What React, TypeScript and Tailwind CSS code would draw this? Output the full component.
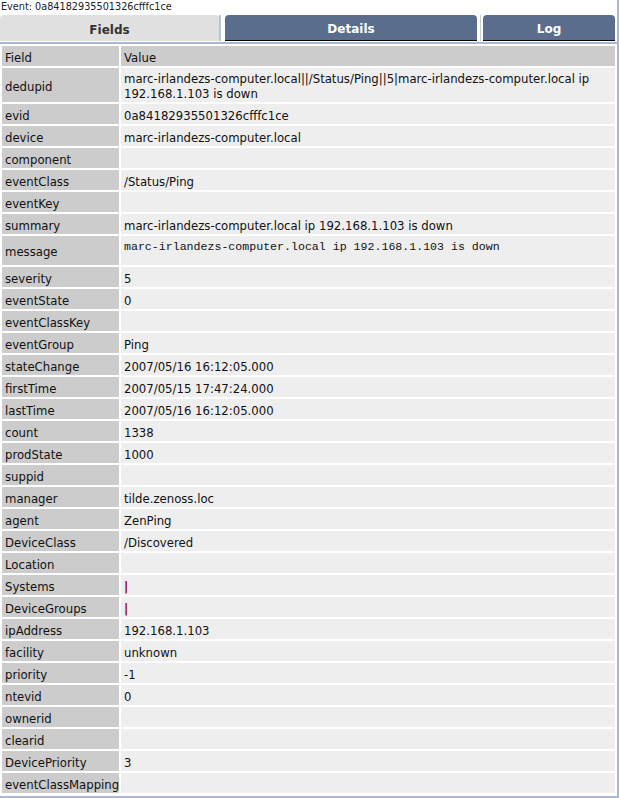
const rows: { field: string; value?: string; tall?: boolean; mono?: boolean; link?: boolean }[] = [
  {
    field: "dedupid",
    value:
      "marc-irlandezs-computer.local||/Status/Ping||5|marc-irlandezs-computer.local ip 192.168.1.103 is down",
    tall: true,
  },
  { field: "evid", value: "0a84182935501326cfffc1ce" },
  { field: "device", value: "marc-irlandezs-computer.local" },
  { field: "component" },
  { field: "eventClass", value: "/Status/Ping" },
  { field: "eventKey" },
  { field: "summary", value: "marc-irlandezs-computer.local ip 192.168.1.103 is down" },
  {
    field: "message",
    value: "marc-irlandezs-computer.local ip 192.168.1.103 is down",
    mono: true,
  },
  { field: "severity", value: "5" },
  { field: "eventState", value: "0" },
  { field: "eventClassKey" },
  { field: "eventGroup", value: "Ping" },
  { field: "stateChange", value: "2007/05/16 16:12:05.000" },
  { field: "firstTime", value: "2007/05/15 17:47:24.000" },
  { field: "lastTime", value: "2007/05/16 16:12:05.000" },
  { field: "count", value: "1338" },
  { field: "prodState", value: "1000" },
  { field: "suppid" },
  { field: "manager", value: "tilde.zenoss.loc" },
  { field: "agent", value: "ZenPing" },
  { field: "DeviceClass", value: "/Discovered" },
  { field: "Location" },
  { field: "Systems", value: "|", link: true },
  { field: "DeviceGroups", value: "|", link: true },
  { field: "ipAddress", value: "192.168.1.103" },
  { field: "facility", value: "unknown" },
  { field: "priority", value: "-1" },
  { field: "ntevid", value: "0" },
  { field: "ownerid" },
  { field: "clearid" },
  { field: "DevicePriority", value: "3" },
  { field: "eventClassMapping" },
];

function Tab({ label, active }: { label: string; active?: boolean }) {
  return active ? (
    <div className="w-[219px] h-[26px] pt-[3px] bg-[#e0e0e0] rounded-tl-[4px] rounded-tr-[3px] flex items-center justify-center text-[12px] font-bold text-[#333]">
      {label}
    </div>
  ) : (
    <div className="h-[26px] flex flex-col">
      <div className="h-[25px] pt-[3px] bg-[#5a6d8d] rounded-tl-[4px] rounded-tr-[4px] flex items-center justify-center text-[12px] font-bold text-white">
        {label}
      </div>
      <div className="h-[1px] bg-black" />
    </div>
  );
}

export default function App() {
  return (
    <div className="w-[619px] h-[798px] bg-white border-r-2 border-b-2 border-[#aab7d0] font-['DejaVu_Sans',sans-serif] text-[#111] overflow-hidden">
      <div className="h-[15px] pl-[1px] pt-[1px] text-[9.7px] leading-[12px] text-[#222]">
        Event: 0a84182935501326cfffc1ce
      </div>
      <div className="flex h-[26px]">
        <Tab label="Fields" active />
        <div className="w-[2px] h-[26px] bg-[#b9c3d6]" />
        <div className="w-[4px]" />
        <div className="w-[252px]">
          <Tab label="Details" />
        </div>
        <div className="w-[3px]" />
        <div className="w-[1px] h-[26px] bg-[#c5cddd]" />
        <div className="w-[2px]" />
        <div className="w-[132px]">
          <Tab label="Log" />
        </div>
      </div>
      <div className="h-[1px]" />
      <div className="h-[2px] bg-[#aab7d0]" />
      <div className="grid grid-cols-[117px_1fr] gap-[2px] p-[2px] text-[11.7px] leading-[15px]">
        <div className="bg-[#cccccc] h-[20px] px-[3px] pt-[5px] flex items-center">Field</div>
        <div className="bg-[#cccccc] h-[20px] px-[3px] pt-[5px] flex items-center">Value</div>
        {rows.map((r) => (
          <div key={r.field} className="contents">
            <div
              className={`bg-[#cccccc] px-[3px] flex items-center whitespace-nowrap ${
                r.tall ? "h-[34px] pt-[4px]" : r.mono ? "h-[29px] pt-[4px]" : "h-[20px] pt-[5px]"
              }`}
            >
              {r.field}
            </div>
            <div
              className={`bg-[#eeeeee] px-[3px] flex ${
                r.tall
                  ? "h-[34px] pt-[4px] items-center"
                  : r.mono
                    ? "h-[29px] items-start pt-[4px]"
                    : "h-[20px] pt-[5px] items-center"
              }`}
            >
              {r.mono ? (
                <pre className="m-0 font-['Liberation_Mono',monospace] text-[11.6px] leading-[14px]">{r.value}</pre>
              ) : r.link ? (
                <span className="text-[#990000] font-bold">{r.value}</span>
              ) : (
                <span>{r.value}</span>
              )}
            </div>
          </div>
        ))}
      </div>
    </div>
  );
}
